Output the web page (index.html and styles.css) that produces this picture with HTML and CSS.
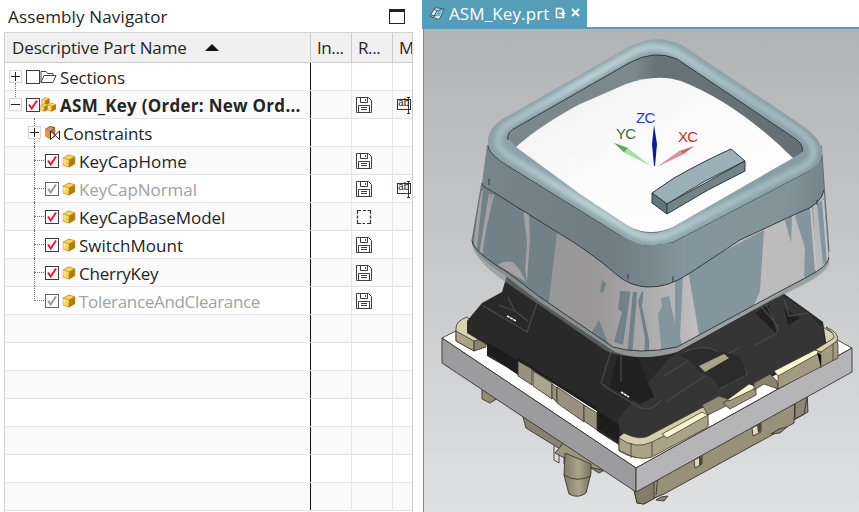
FILE: index.html
```html
<!DOCTYPE html>
<html lang="en">
<head>
<meta charset="utf-8">
<title>Assembly Navigator</title>
<link rel="stylesheet" href="styles.css">
</head>
<body>
<svg class="defs" width="0" height="0" aria-hidden="true">
  <defs>
    <linearGradient id="gold" x1="0" y1="0" x2="1" y2="1"><stop stop-color="#fff6a0"/><stop offset="1" stop-color="#e9bd2f"/></linearGradient>
    <symbol id="cube" viewBox="0 0 14 14"><path d="M1 4 7 .8l6 2v7L7 13.3l-6-2Z" fill="#c08a12"/><path d="M1.3 4 7 1.2l5.5 1.7L7 5.7Z" fill="#f5d34e"/><path d="M1 4.2 7 6v7l-6-1.8Z" fill="url(#gold)"/><path d="m7 6 6-3v6.700L7 13Z" fill="#b57b0b"/><path d="M1 4 7 .8l6 2v7L7 13.300l-6-2ZM1 4l6 1.800 6-3M7 6v7" fill="none" stroke="#b08a2c" stroke-width=".4"/></symbol>
    <symbol id="save" viewBox="0 0 16 16"><path d="M.5.500h12l3 3v12H.5ZM4.500.500v5h7v-5M9.500 2v2M2.500 15V8.500h11V15M5 10.500h6M5 12.500h6" fill="none" stroke="#3f3f3f"/></symbol>
    <symbol id="tick" viewBox="0 0 12 12"><path d="m2 5.500 2.700 4 5.300-8" fill="none" stroke="currentColor" stroke-width="2"/></symbol>
  </defs>
</svg>
<div class="app">
  <section class="navigator">
    <header class="titlebar"><h1>Assembly Navigator</h1><span class="maximize"></span></header>
    <div class="table">
      <div class="row head">
        <div class="name"><span class="t-head">Descriptive Part Name</span><i class="sort"></i></div>
        <div class="col">In...</div><div class="col">R...</div><div class="col last">M</div>
      </div>
      <div class="row">
        <div class="name root"><i class="exp plus"></i><i class="box gap"></i>
          <svg class="folder" width="17" height="14" viewBox="0 0 17 14"><path d="M1 12.500v-11h5l1.500 2H13v2M1 12.500l3-7h12l-3 7Z" fill="none" stroke="#444"/></svg>
          <span class="t-sec">Sections</span></div>
        <div class="col"></div><div class="col"></div><div class="col last"></div>
      </div>
      <div class="row alt">
        <div class="name root up"><i class="exp"></i><i class="box gap"><svg><use href="#tick"/></svg></i>
          <svg class="asm" width="17" height="16" viewBox="0 0 17 16"><use href="#cube" x="1" y="0" width="9" height="9"/><use href="#cube" x="0" y="6" width="9" height="9"/><use href="#cube" x="7" y="5.500" width="9.500" height="9.500"/></svg>
          <span class="t-asm">ASM_Key (Order: New Ord...</span></div>
        <div class="col"></div><div class="col"><svg class="save"><use href="#save"/></svg></div><div class="col last"><span class="ab">ab</span></div>
      </div>
      <div class="row">
        <div class="name child first"><i class="exp plus"></i>
          <svg class="con" width="17" height="16" viewBox="0 0 17 16"><path d="m1 4 5-3 5 1v9l-5 3-5-3Z" fill="#965026"/><path d="m1 4 5 2v8l-5-3Z" fill="#f79232"/><path d="m2 4 4-2 4 1-4 3Z" fill="#afa39b"/><path d="m6 6 5-3v9l-5 2Z" fill="#df5915"/><path d="m6.500 6 9 8.500V6l-9 8.500Z" fill="#fff" stroke="#222"/></svg>
          <span class="t-con">Constraints</span></div>
        <div class="col"></div><div class="col"></div><div class="col last"></div>
      </div>
      <div class="row alt">
        <div class="name child"><i class="branch"></i><i class="box"><svg><use href="#tick"/></svg></i><svg class="part"><use href="#cube"/></svg><span class="t-home">KeyCapHome</span></div>
        <div class="col"></div><div class="col"><svg class="save"><use href="#save"/></svg></div><div class="col last"></div>
      </div>
      <div class="row">
        <div class="name child off"><i class="branch"></i><i class="box"><svg><use href="#tick"/></svg></i><svg class="part"><use href="#cube"/></svg><span class="t-norm">KeyCapNormal</span></div>
        <div class="col"></div><div class="col"><svg class="save"><use href="#save"/></svg></div><div class="col last"><span class="ab">ab</span></div>
      </div>
      <div class="row alt">
        <div class="name child"><i class="branch"></i><i class="box"><svg><use href="#tick"/></svg></i><svg class="part"><use href="#cube"/></svg><span class="t-base">KeyCapBaseModel</span></div>
        <div class="col"></div><div class="col"><svg class="dash" viewBox="0 0 16 16"><path d="M1.500 5V1.500H5M7 1.500h3M11.500 1.500h3V5M14.500 6.500v3M14.500 11v3.500H11M9 14.500H6.500M5 14.500H1.500V11M1.500 9.500v-3" fill="none" stroke="#333" stroke-width="1.200"/></svg></div><div class="col last"></div>
      </div>
      <div class="row">
        <div class="name child"><i class="branch"></i><i class="box"><svg><use href="#tick"/></svg></i><svg class="part"><use href="#cube"/></svg><span class="t-switch">SwitchMount</span></div>
        <div class="col"></div><div class="col"><svg class="save"><use href="#save"/></svg></div><div class="col last"></div>
      </div>
      <div class="row alt">
        <div class="name child"><i class="branch"></i><i class="box"><svg><use href="#tick"/></svg></i><svg class="part"><use href="#cube"/></svg><span class="t-cherry">CherryKey</span></div>
        <div class="col"></div><div class="col"><svg class="save"><use href="#save"/></svg></div><div class="col last"></div>
      </div>
      <div class="row">
        <div class="name child end off"><i class="branch"></i><i class="box"><svg><use href="#tick"/></svg></i><svg class="part"><use href="#cube"/></svg><span class="t-tol">ToleranceAndClearance</span></div>
        <div class="col"></div><div class="col"><svg class="save"><use href="#save"/></svg></div><div class="col last"></div>
      </div>
      <div class="row alt"><div class="name"></div><div class="col"></div><div class="col"></div><div class="col last"></div></div>
      <div class="row"><div class="name"></div><div class="col"></div><div class="col"></div><div class="col last"></div></div>
      <div class="row alt"><div class="name"></div><div class="col"></div><div class="col"></div><div class="col last"></div></div>
      <div class="row"><div class="name"></div><div class="col"></div><div class="col"></div><div class="col last"></div></div>
      <div class="row alt"><div class="name"></div><div class="col"></div><div class="col"></div><div class="col last"></div></div>
      <div class="row"><div class="name"></div><div class="col"></div><div class="col"></div><div class="col last"></div></div>
      <div class="row alt"><div class="name"></div><div class="col"></div><div class="col"></div><div class="col last"></div></div>
    </div>
  </section>
  <main class="viewer">
    <div class="tabs"><div class="tab">
      <svg width="16" height="16" viewBox="0 0 16 16"><path d="m1 10 4-7q2-2 4-1l6 1-4 9q-1 2-3 1Z" fill="#d8e9e9" stroke="#405b64"/><path d="m5 3 3 2-4 7M8 5q3-2 6-1M2 9l4 1q2-2 5-1" fill="none" stroke="#38545b"/><path d="m9 5 4-1-2 5-4 1Z" fill="#53b8cb"/></svg>
      <span class="t-tab">ASM_Key.prt</span>
      <svg class="edit" width="11" height="12" viewBox="0 0 11 12"><path d="M6.500 1.500H1.500v9h7V8M6.500 1.500l2 2v2M4 6.500h5M7 4.500l2.500 2-2.500 2" fill="none" stroke="#fff" stroke-width="1.500"/></svg>
      <svg class="close" width="9" height="9" viewBox="0 0 9 9"><path d="m1 1 7 7M8 1 1 8" stroke="#fff" stroke-width="2"/></svg>
    </div></div>
    <svg class="model" viewBox="424 29 435 483" width="435" height="483">
      <defs>
        <linearGradient id="band" gradientUnits="userSpaceOnUse" x1="482" y1="0" x2="830" y2="0"><stop stop-color="#77868b"/><stop offset=".36" stop-color="#6f7d82"/><stop offset=".47" stop-color="#77878d"/><stop offset=".58" stop-color="#84969d"/><stop offset=".88" stop-color="#82939a"/><stop offset="1" stop-color="#748389"/></linearGradient>
        <linearGradient id="strip" gradientUnits="userSpaceOnUse" x1="472" y1="0" x2="830" y2="0"><stop stop-color="#949595"/><stop offset=".36" stop-color="#9b9999"/><stop offset=".5" stop-color="#aeadae"/><stop offset=".65" stop-color="#c3c1c2"/><stop offset="1" stop-color="#b7b8b9"/></linearGradient>
        <linearGradient id="inside" gradientUnits="userSpaceOnUse" x1="508" y1="0" x2="803" y2="0"><stop stop-color="#7b888b"/><stop offset=".43" stop-color="#7b888c"/><stop offset=".5" stop-color="#667377"/><stop offset="1" stop-color="#657074"/></linearGradient>
        <linearGradient id="face" x1="0" y1="0" x2="1" y2="1"><stop stop-color="#eeeeef"/><stop offset=".45" stop-color="#fbfbfb"/><stop offset="1" stop-color="#fff"/></linearGradient>
        <linearGradient id="rim" gradientUnits="userSpaceOnUse" x1="488" y1="0" x2="823" y2="0"><stop stop-color="#8ba1a8"/><stop offset=".3" stop-color="#8ea4ab"/><stop offset=".6" stop-color="#8fa5ac"/><stop offset="1" stop-color="#849aa1"/></linearGradient>
        <linearGradient id="glow" gradientUnits="userSpaceOnUse" x1="488" y1="0" x2="823" y2="0"><stop stop-color="#a2b8bf"/><stop offset=".3" stop-color="#bdd3d8"/><stop offset=".5" stop-color="#b4cbd0"/><stop offset=".8" stop-color="#a3b9c0"/><stop offset="1" stop-color="#a5bbc3"/></linearGradient>
        <linearGradient id="peg" x1="0" x2="1"><stop stop-color="#817c67"/><stop offset=".55" stop-color="#aaa58a"/><stop offset="1" stop-color="#777260"/></linearGradient>
        <filter id="soft" x="-10%" y="-10%" width="120%" height="120%"><feGaussianBlur stdDeviation="2.200"/></filter>
        <clipPath id="skirt"><path d="M482 183 472 241q2 11 35 31l33 25 73 50q26 8 64 0l96-52 34-18q22-11 22-20l-5-59-50 26-50 20-60 43q-25 9-53 2L557 232Z"/></clipPath>
      </defs>
      <g stroke="#38362f" stroke-width=".9" stroke-linejoin="round">
        <path d="M482 388v11l8 4 8-5-1-9Z" fill="#918c76"/>
        <path d="m523 417 3 11 73 45 8-4v-10Z" fill="#888370"/>
        <path d="M554 446v14l5 3v-12M559 451l5 3v10" fill="#ddd"/>
        <path d="m555 453 11-13 25 14 15 17-30-7Z" fill="#9b967d"/>
        <path d="m565 453-1 22 5 19q9 5 17-1l5-20v-9Z" fill="url(#peg)"/><path d="M564 475q13 8 27 1" fill="none"/>
        <path d="m634 490 3 13 7 1 164-92-1-19Z" fill="#8d8874"/>
        <path d="m634 490 3 13 7 1 11-6-1-20Z" fill="#827d69"/>
        <path d="M654 477v21l10-4 130-71 1-28Z" fill="#989078"/>
        <path d="m658 475-2 20M795 394v25l9-5 4-22" fill="none"/>
        <path d="m771 434 9-1 7-6-8 2Z M656 500l8 1 4-5-7 1Z" fill="#88836e"/>
        <path d="m694 460 8-4v8l-7 4Z M752 428l9-5v9l-8 4Z" fill="#dedbb9"/>
        <path d="m442 338 203-103 207 113-216 120Z" fill="#fff"/>
        <path d="M442 338v25l194 129v-24Z" fill="#9c9b9d"/>
        <path d="m636 468 216-120v24L636 492Z" fill="#b5b4b7"/>
      </g>
      <path d="m699 457 3-1v8l-3 2ZM757 425l4-2v8l-3 2Z" fill="#4b483d"/>
      <g stroke="#36342c" stroke-width=".8" stroke-linejoin="round">
        <path d="m457 326 8-7 20-2 2 18-7 6-23-12Z" fill="#d1cdac"/>
        <path d="M456 328q0-7 11-11l19 19-1 7-11 8-18-10Z" fill="#d8d3af"/><path d="m456 331 18 10v10l-18-10Z" fill="#aaa486"/><path d="m474 341 12-4v10l-12 4Z" fill="#88836d"/>
        <path d="m794 319 12-3 31 20v9l-16 7Z" fill="#d7d2af"/>
      </g>
      <path d="m507 275-5 17-20 11-15 18v12l20 12v11l31 18v-13l79 50v20l22 14q14 7 24-1l184-96-4-26-15-11-25-18-25-12-80-25Z" fill="#29292a"/>
      <path d="m669 358 105-61 9-2 25 18 15 14 2 18-182 98q-22 3-25-24Z" fill="#353536"/>
      <path d="m487 342 28 17 104 66v17l-22-14v-20l-79-50v17l-31-22Z" fill="#1d1d20"/>
      <g fill="#98927c" stroke="#343229" stroke-width=".8"><path d="m518 361 14 8v16l-14-9Z"/><path d="m533 371 19 12v16l-19-13Z" fill="#aaa58d"/><path d="m552 384 5 4v14l-5-4Z"/><path d="m557 387 27 18v17l-27-19Z"/><path d="m584 405 13 8v17l-13-9Z"/></g>
      <path d="m755 313 14-8 8 29Z M784 308l16 10-12 7Z M619 350l13-5 22 52-14 7-30-17Z" fill="#202021"/>
      <g fill="none" stroke="#48484a" stroke-width="1.300">
        <path d="M482 305 527 332l10-29M508 297l7 14 13 10M515 311l-16-6M612 348l-11 35 6 5 34 20q13 3 20-8M621 355v27M667 401l38-25M664 376l24-15M754 346l23-13 1-7-22-25M766 304l13 27M784 299l5 17 19-3M741 347l-37 19"/>
      </g>
      <path d="M680 355q21-11 40-4l18 5 9 13-2 8-26 12q-5-14-21-18l-7-10Z" fill="#2b2b2c"/><path d="M684 352q20-9 35 0M719 389l28-14-2-8" fill="none" stroke="#4c4c4e"/>
      <path d="m699 366 25-12 5 4-24 14Z" fill="#aaa58a"/>
      <path d="m507 316 9 5M621 392l8 5" stroke="#f7f7f7" stroke-width="1.500" stroke-dasharray="3 .6"/>
      <g stroke="#3c3a31" stroke-width=".8" stroke-linejoin="round">
        <path d="m619 437 5-4q17 9 28 1l55-29 1 20-60 31q-12 5-29-5Z" fill="#d5cfac"/>
        <path d="M619 438q17 12 33 4l56-28v13l-56 30q-14 5-33-7Z" fill="#aaa387"/><path d="m667 438-5-4 40-22 6 3Z" fill="#faf4ce"/><path d="M631 443v15M652 442v14"/>
        <path d="m702 405 17-9 15 5-12 7-14 7Z" fill="#8f8a74"/>
        <path d="m723 403 6 5 26-14v-8l-6-2Z" fill="#faf3cf"/><path d="m729 401 27-13v7l-26 14-7-6 6-3Z" fill="#9f987f"/>
        <path d="m754 383 16-9 7 7 1 8-14-5-10 6Z" fill="#89846d"/>
        <path d="m775 371 42-22 19-12 2 9v12l-60 31v-13Z" fill="#a39b80"/>
        <path d="m774 371 41-21 6 2-43 24Z" fill="#fff7ce"/><path d="m815 350 19-12q1-4-8-11 14 6 11 14l-16 11Z" fill="#d9d4b2"/><path d="m817 352 4 3v13M833 344v17"/>
      </g>
      <path d="M482 183 472 243q2 13 35 34l33 25 75 50q25 10 62 0l96-53 38-20q17-11 18-22l-5-65Z" fill="url(#strip)"/>
      <g clip-path="url(#skirt)">
        <path d="M470 175h87v57l-9 77-78-45Z" fill="#718187"/>
        <path d="m523 210 6 2 1 28-3 42-2-12 2-28ZM498 265q6-5 14-3 8 5 14 20l-15-9ZM480 190l3 1-7 65-3-5ZM489 193l2 2-9 62-3-2ZM492 194l2 1-8 35-1-5Z" fill="#a3a1a1"/>
        <path d="m604 267 5 9-6 17-3-1ZM590 335l9-15 12 31ZM622 276l10 4-9 65-9-3 8-30-4-3ZM634 279l4 3-6 75-5-1ZM644 286l-2 20 7 34 0 17-5-1 1-18-7-37Z" fill="#718187"/>
        <path d="m688 270 76-40-4 61-11 26-48 29ZM785 220l6 23 1-27ZM800 210l13-4 3 66-11 8v-32l-10-32ZM805 249l9 18-10 10ZM817 204l9-7 5 65-8 2Z M661 298l8-2 12 55-19 4-4-41 4-8ZM675 281l8-4-3 60 6 20-11 4Z" fill="#84969d"/>
        <path d="m811 208 5 62M823 200l5 63" stroke="#c6c4c3" stroke-width="2" fill="none"/>
      </g>
      <path d="M472 241q2 11 35 31l33 25 73 50q26 8 64 0l96-52 34-18q22-11 22-20v7q-2 7-20 18l-69 35-63 35q-37 11-71-1l-65-45-37-25Q472 259 472 241Z" fill="#7c858688"/>
      <path d="M487 145 482 183l8 7 67 42q34 20 60 43 13 11 30 12 21 1 43-14l50-33 60-28q21-7 24-22l-2-45-115 70-65 30Z" fill="url(#band)"/>
      <path d="M482 183q0 4 8 7l67 42q34 20 60 43 13 11 30 12 21 1 43-14l50-33 60-28q21-7 24-22M472 241q2 11 35 31l33 25 73 50q26 8 64 0l96-52 34-18q22-11 22-20M488 145q-1 9 25 24l107 66q25 14 53 7l134-70q14-8 15-17M489 185v-6M628 279v-5M673 282v-6M817 205v-5" fill="none" stroke="#273034" stroke-width=".9"/>
      <path d="m482 183-10 58M822 156l2 29 5 67" fill="none" stroke="#657277" stroke-width="1.300"/>
      <path d="M488 143q-1-17 20-27L627 48q28-16 55-3l118 79q22 15 22 28 1 12-15 20L673 242q-29 9-53-7l-113-70q-19-12-19-22Z" fill="url(#rim)"/>
      <path d="M498 143q-2-12 14-21L634 52q20-10 42 0l120 77q23 16 16 29-2 5-12 10L670 234q-21 9-43-5l-115-71q-13-8-14-15Z" fill="none" stroke="url(#glow)" stroke-width="7" filter="url(#soft)"/>
      <path d="M508 138q-2-6 9-11l112-64q25-14 48-4l120 81q8 7 4 13l-8 5-120 69q-22 12-43 0l-114-80Z" fill="url(#inside)"/>
      <path d="M516 147q22-20 62-42l48-21q31-11 55-3 56 22 112 77l-120 69q-22 10-43 0l-50-33Z" fill="url(#face)"/>
      <path d="M508 140q-2-8 9-13l112-64q25-14 48-4l120 81q7 6 5 12" fill="none" stroke="#303b3f"/>
      <g stroke="#30383b" stroke-linejoin="round"><path d="m652 193 22-15q30-17 57-29l14 12-40 20-38 23Z" fill="#9aafb7"/><path d="m652 193 15 11v10l-15-11Z" fill="#62757e"/><path d="m667 204 78-43v10l-37 19-41 24Z" fill="#708389"/></g>
      <path d="m654 166-2-22 2-19 3 19-2 22Z" fill="#071d98"/><path d="m657 167 22-16 15-5-10 8Z" fill="#d69599"/><path d="m681 151 13-5-11 8Z" fill="#c5686c"/><path d="m651 166-28-14-8-9 14 6Z" fill="#9ee49b"/><path d="m614 143 14 5-4 4Z" fill="#5da958"/>
      <g class="axes"><text x="636" y="123" fill="#2635e3">ZC</text><text x="616" y="139" fill="#386a38">YC</text><text x="678" y="142" fill="#cf2930">XC</text></g>
    </svg>
  </main>
</div>
</body>
</html>
```

FILE: styles.css
```css
* { box-sizing: border-box; }
body { margin: 0; width: 859px; height: 512px; overflow: hidden; background: #fff; color: #252525; font: 17px/27px "Open Sans", "Noto Sans", sans-serif; }
.defs { position: absolute; }
.app { display: flex; height: 512px; }
.navigator { width: 422px; flex: none; padding-left: 4px; }
.titlebar { height: 32px; display: flex; justify-content: space-between; padding: 4px 17px 0 4px; }
h1 { margin: 0; font-size: 17px; line-height: 26px; font-weight: 400; letter-spacing: .16px; }
.maximize { width: 16px; height: 15px; margin-top: 5px; border: 1px solid #222; border-top-width: 3px; }
.table { width: 409px; height: 480px; border: 1px solid #d0d0d0; border-bottom: 0; overflow: hidden; }
.row { height: 28px; display: flex; border-bottom: 1px solid #e6e6e6; }
.row.alt { background: #fafafa; }
.row.head { height: 30px; background: #f0f0f0; border-color: #ccc; line-height: 34px; }
.name { width: 306px; border-right: 1px solid #111; flex: none; display: flex; align-items: center; white-space: nowrap; position: relative; }
.name > span { padding-top: 2px; }
.head .name { border-color: #ccc; padding-left: 7px; }
.head .name > span { padding-top: 0; }
.col { width: 41px; flex: none; border-right: 1px solid #e4e4e4; display: flex; align-items: center; padding-left: 4px; }
.col.last { width: 19px; border: 0; overflow: hidden; }
.head .col { border-color: #ccc; padding-left: 6px; letter-spacing: -.4px; }
.sort { border: 7px solid transparent; border-top: 0; border-bottom: 7px solid #111; margin-left: 18px; }
.root { padding-left: 4px; }
.child { padding-left: 23px; }
.exp { width: 13px; height: 13px; border: 1px solid #d6d6d6; flex: none; background: linear-gradient(#222, #222) center / 9px 1px no-repeat, #fff; z-index: 1; }
.exp.plus { background: linear-gradient(#222, #222) center / 9px 1px no-repeat, linear-gradient(#222, #222) center / 1px 9px no-repeat, #fff; }
.box { width: 14px; height: 14px; border: 1px solid #42373f; background: #fff; color: #ed173e; flex: none; display: block; }
.box svg { display: block; width: 12px; height: 12px; }
.box.gap { margin-left: 4px; }
.off { color: #a2a2a2; }
.off .box { color: #999; border-color: #666; }
.folder { margin-right: 3px; }
.asm { margin-right: 3px; }
.con { margin: 0 2px 0 3px; }
.part { width: 14px; height: 14px; margin: 0 3px; }
.branch { width: 10px; margin-left: 6px; margin-right: 1px; height: 1px; border-top: 1px dotted #777; flex: none; }
.child::before { content: ""; position: absolute; left: 29px; top: -1px; height: 28px; border-left: 1px dotted #777; }
.child.end::before { height: 15px; }
.root.up::before { content: ""; position: absolute; left: 10px; top: -8px; height: 16px; border-left: 1px dotted #777; }
.t-head { letter-spacing: -.12px; }
.t-sec { letter-spacing: -.15px; }
.t-asm { font-weight: 700; letter-spacing: .27px; }
.t-con { letter-spacing: -.15px; }
.t-home { letter-spacing: .08px; }
.t-norm { letter-spacing: -.05px; }
.t-base { letter-spacing: -.04px; }
.t-switch { letter-spacing: .02px; }
.t-cherry { letter-spacing: -.25px; }
.t-tol { letter-spacing: -.33px; }
.save, .dash { width: 16px; height: 16px; flex: none; }
.ab { flex: none; position: relative; width: 14px; height: 11px; border: 1px solid #333; font: 10px/7px "Liberation Mono", monospace; letter-spacing: -.5px; }
.ab::after { content: ""; position: absolute; right: 0; top: -3px; width: 3px; height: 15px; border: solid #333; border-width: 1px 0; background: linear-gradient(#333, #333) center / 1px 100% no-repeat; }
.viewer { width: 437px; display: flex; flex-direction: column; }
.tabs { height: 29px; border-bottom: 2px solid #559eb7; }
.tab { width: 165px; height: 27px; background: #559eb7; color: #fff; display: flex; align-items: center; padding-left: 7px; }
.t-tab { margin-left: 4px; letter-spacing: .12px; }
.edit { margin: 0 0 2px 6px; }
.close { margin: 0 0 2px 5px; }
.model { margin-left: 1px; width: 436px; height: 483px; border-left: 1px solid #858789; background: linear-gradient(#b2b3b5, #c8c9cb 50%, #dfe0e2); display: block; }
.axes { font: 15px "Liberation Sans", sans-serif; letter-spacing: -.7px; }
```
